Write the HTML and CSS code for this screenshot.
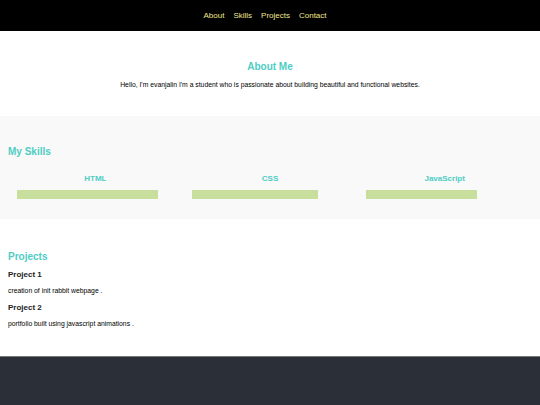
FILE: index.html
```html
<!DOCTYPE html>
<html lang="en">
<head>
<meta charset="utf-8">
<title>Portfolio</title>
<link rel="stylesheet" href="styles.css">
</head>
<body>
<header class="topbar">
  <nav class="nav">
    <a href="#about">About</a>
    <a href="#skills">Skills</a>
    <a href="#projects">Projects</a>
    <a href="#contact">Contact</a>
  </nav>
</header>
<section class="about" id="about">
  <h2 class="heading">About Me</h2>
  <p class="text">Hello, I'm evanjalin I'm a student who is passionate about building beautiful and functional websites.</p>
</section>
<section class="skills" id="skills">
  <h2 class="heading">My Skills</h2>
  <div class="skill-list">
    <div class="skill">
      <h3 class="skill-name">HTML</h3>
      <div class="bar" style="width: 90%"></div>
    </div>
    <div class="skill">
      <h3 class="skill-name">CSS</h3>
      <div class="bar" style="width: 80.5%"></div>
    </div>
    <div class="skill">
      <h3 class="skill-name">JavaScript</h3>
      <div class="bar" style="width: 70.5%"></div>
    </div>
  </div>
</section>
<section class="projects" id="projects">
  <h2 class="heading">Projects</h2>
  <h3 class="project-title">Project 1</h3>
  <p class="text">creation of init rabbit webpage .</p>
  <h3 class="project-title">Project 2</h3>
  <p class="text">portfolio built using javascript animations .</p>
</section>
<footer class="footer" id="contact"></footer>
</body>
</html>
```
FILE: styles.css
```css
html, body {
  margin: 0;
  padding: 0;
}
body {
  font-family: "Liberation Sans", Arial, sans-serif;
  background: #ffffff;
  color: #000;
}
.topbar {
  background: #000;
  height: 31px;
  display: flex;
  align-items: center;
  justify-content: center;
}
.nav {
  display: flex;
  gap: 9px;
  font-size: 8px;
  margin-left: -10px;
}
.nav a {
  color: #f0e68c;
  text-decoration: none;
}
.heading {
  color: #4ecdc4;
  font-size: 10px;
  font-weight: bold;
  margin: 0;
}
.text {
  font-size: 6.8px;
  margin: 0;
}
.about {
  height: 85px;
  box-sizing: border-box;
  padding-top: 30px;
  text-align: center;
}
.about .text {
  margin-top: 9px;
}
.skills {
  background: #f9f9f9;
  height: 103px;
  box-sizing: border-box;
  padding: 30px 8px 0;
}
.skill-list {
  display: flex;
  margin-top: 17px;
}
.skill {
  flex: 1;
  padding: 0 9px;
}
.skill-name {
  color: #4ecdc4;
  font-size: 8px;
  text-align: center;
  margin: 0 0 7px;
}
.bar {
  height: 9px;
  background: #c8de9c;
}
.projects {
  height: 137px;
  box-sizing: border-box;
  padding: 32px 8px 0;
}
.project-title {
  font-size: 8px;
  margin: 8px 0 8px;
  color: #222;
}
.projects .text {
  margin-bottom: 9px;
}
.footer {
  background: #2b2f38;
  border-top: 1px solid #777;
  height: 49px;
}
```
